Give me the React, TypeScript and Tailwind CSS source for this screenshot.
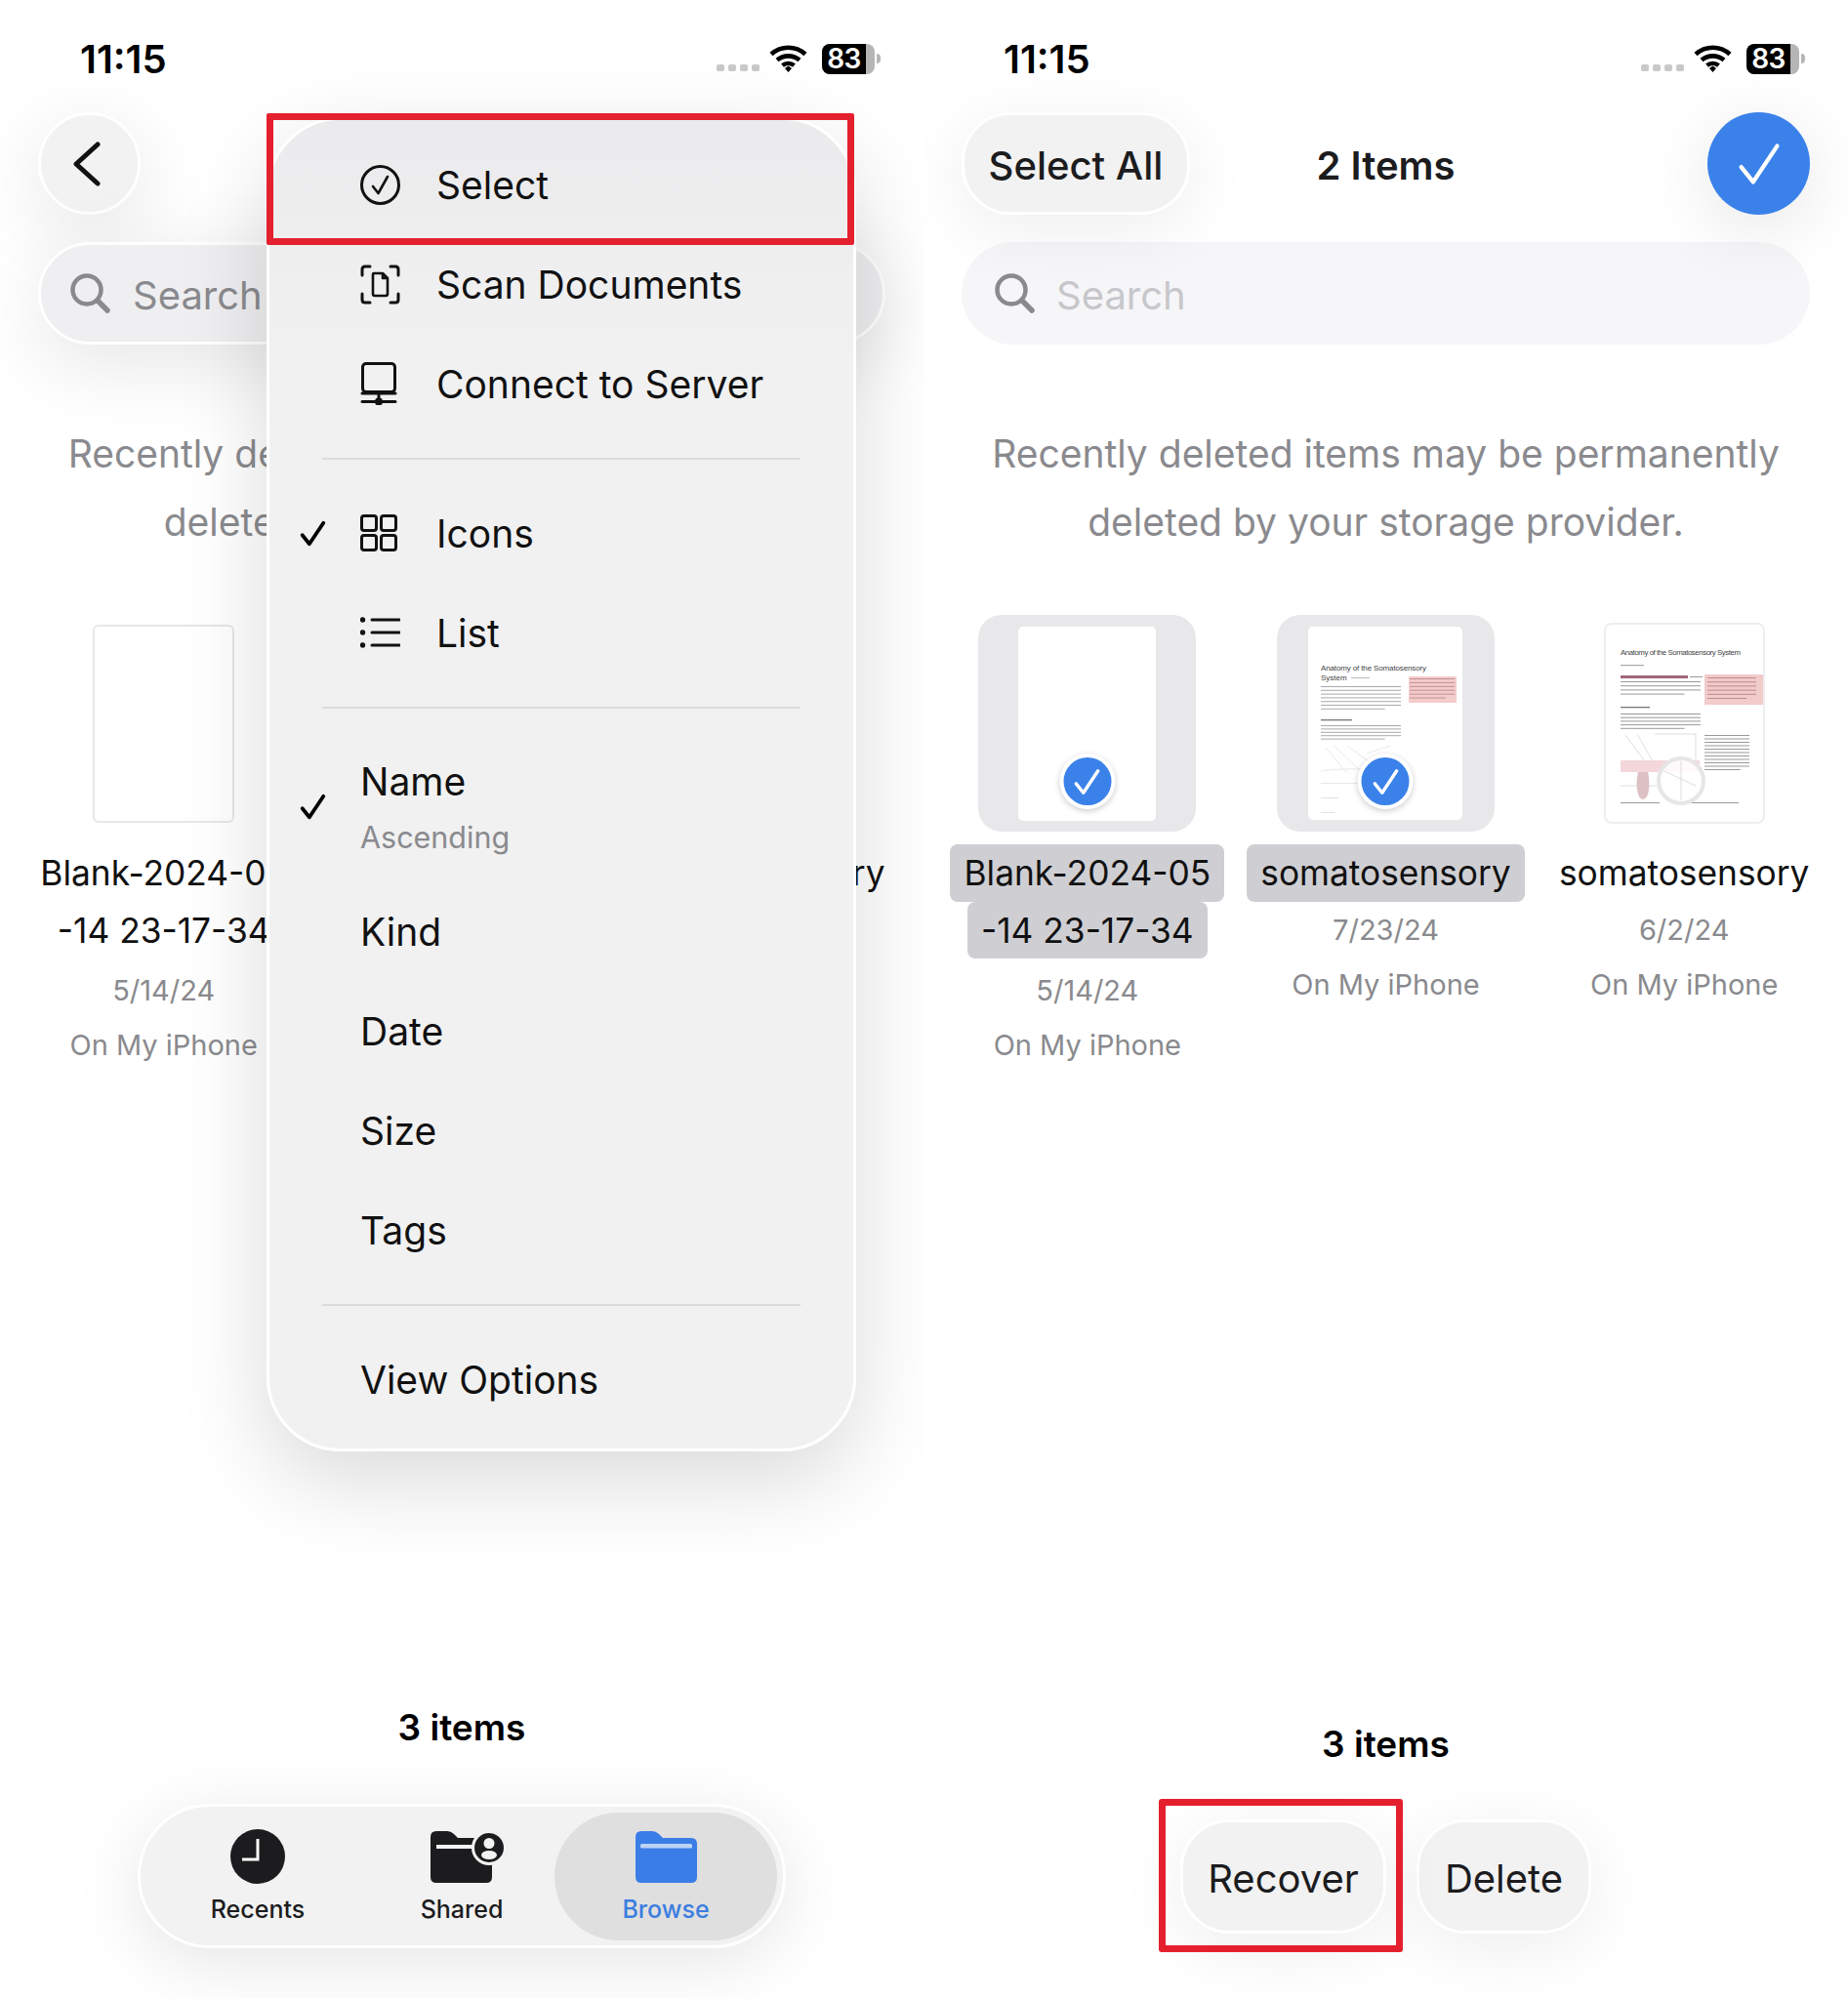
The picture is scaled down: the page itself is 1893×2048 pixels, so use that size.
import React from "react";

const Check = ({ className, w = 5 }: { className?: string; w?: number }) => (
  <svg viewBox="0 0 30 30" className={className} fill="none" stroke="currentColor" strokeWidth={w} strokeLinecap="round" strokeLinejoin="round">
    <path d="M3 17 L11 27 L27 3" />
  </svg>
);

const Wifi = () => (
  <svg viewBox="0 0 39 28" className="h-[28px] w-[39px]" fill="none" stroke="#000" strokeWidth="4.6">
    <path d="M2 9.5 C12 0.5 27 0.5 37 9.5" />
    <path d="M8 15.5 C14.5 10 24.5 10 31 15.5" />
    <path d="M13.5 21 C17 18.3 22 18.3 25.5 21" />
    <path d="M16 24 L19.5 21.5 L23 24 L19.5 28 Z" fill="#000" stroke="none" />
  </svg>
);

const StatusBar = () => (
  <div className="flex h-[115px] shrink-0 items-center justify-between pt-[5px] pr-[44px] pl-[82px]">
    <span className="mt-[2px] text-[40px] leading-none font-semibold text-black">11:15</span>
    <div className="flex items-center">
      <div className="mt-[19px] flex gap-[4px]">
        {[0, 1, 2, 3].map((i) => (
          <span key={i} className="h-[7px] w-[8px] rounded-[2px] bg-[#c9c9c9]" />
        ))}
      </div>
      <div className="mr-[15px] ml-[10px]">
        <Wifi />
      </div>
      <div className="flex h-[31px] w-[54px] rounded-[8px] bg-[#b5b5b5]">
        <div className="flex h-full w-[45px] items-center justify-center rounded-l-[8px] bg-black text-[28px] leading-[31px] font-semibold tracking-[-0.5px] text-white">83</div>
      </div>
      <div className="ml-[2px] h-[10px] w-[4px] rounded-r-full bg-[#b5b5b5]" />
    </div>
  </div>
);

const SearchBar = ({ textColor, box }: { textColor: string; box: string }) => (
  <div className={box}>
    <svg viewBox="0 0 41 41" className="h-[41px] w-[41px] shrink-0" fill="none" stroke="#8a8a8e" strokeWidth="4.5" strokeLinecap="round">
      <circle cx="17" cy="17" r="14.5" />
      <path d="M28 28 L38 38" strokeWidth="5.5" />
    </svg>
    <span className={`mt-[5px] ${textColor}`}>Search</span>
  </div>
);

const Lines = ({ x, y, w, n, step, color, h = 1 }: { x: number; y: number; w: number; n: number; step: number; color: string; h?: number }) => (
  <>
    {Array.from({ length: n }).map((_, i) => (
      <rect key={i} x={x} y={y + i * step} width={i === n - 1 ? w * 0.8 : w} height={h} fill={color} />
    ))}
  </>
);

const DocMiddle = () => (
  <svg viewBox="0 0 158 198" className="h-[198px] w-[158px] rounded-[5px] bg-white">
    <text x="13" y="45" fontSize="8" fontFamily="Liberation Sans, sans-serif" fill="#444" textLength="108">Anatomy of the Somatosensory</text>
    <text x="13" y="55" fontSize="8" fontFamily="Liberation Sans, sans-serif" fill="#444">System</text>
    <rect x="44" y="52" width="19" height="1" fill="#bbb" />
    <Lines x={13} y={61} w={82} n={7} step={3.8} color="#aaaaaa" />
    <rect x="103" y="51" width="49" height="27" fill="#f3cccc" />
    <Lines x={104} y={53} w={46} n={6} step={3.9} color="#c58f8f" />
    <rect x="13" y="95" width="32" height="1.3" fill="#777" />
    <Lines x={13} y={101} w={82} n={5} step={3.4} color="#aaaaaa" />
    <g fill="none" stroke="#e2e2e2" strokeWidth="0.8">
      <path d="M18 124 L40 150 M26 122 L52 146 M40 122 L70 144 M60 130 L84 122" />
      <path d="M13 148 C40 144 70 146 90 150" />
    </g>
    <rect x="13" y="160" width="70" height="0.8" fill="#e2e2e2" />
    <rect x="13" y="175" width="18" height="0.8" fill="#dcdcdc" />
    <rect x="13" y="190" width="14" height="0.8" fill="#dcdcdc" />
  </svg>
);

const DocThird = () => (
  <svg viewBox="0 0 161 202" className="h-[202px] w-[161px] rounded-[6px] bg-white shadow-[0_0_0_2px_#eeeef0]">
    <text x="15" y="31" fontSize="7.8" fontFamily="Liberation Sans, sans-serif" fill="#444" textLength="123">Anatomy of the Somatosensory System</text>
    <rect x="15" y="41" width="24" height="1.2" fill="#aaa" />
    <rect x="15" y="52" width="69" height="3" fill="#a0667c" />
    <Lines x={15} y={58} w={82} n={4} step={4.2} color="#999" />
    <rect x="86" y="53" width="13" height="1" fill="#999" />
    <rect x="101" y="51" width="60" height="31" fill="#f2cbcb" />
    <Lines x={104} y={54} w={50} n={6} step={4.2} color="#c08a8a" />
    <rect x="15" y="84" width="30" height="1.3" fill="#777" />
    <Lines x={15} y={91} w={82} n={5} step={3.7} color="#999" />
    <Lines x={101} y={113} w={46} n={11} step={3.5} color="#999" />
    <g fill="none" stroke="#d5d5d5" strokeWidth="0.8">
      <path d="M20 113 L40 140 M32 112 L48 140 M50 112 L92 112 M92 112 L92 165" />
      <path d="M15 165 L92 165" />
    </g>
    <rect x="15" y="139" width="81" height="12" fill="#f3d7da" />
    <path d="M33 151 C30 165 32 178 38 179 C44 178 46 165 43 151 Z" fill="#dcc0c3" />
    <rect x="15" y="182" width="40" height="1" fill="#999" />
    <rect x="86" y="182" width="50" height="1" fill="#999" />
    <circle cx="77" cy="160" r="23" fill="#fff" fillOpacity="0.85" stroke="#e6e6e6" strokeWidth="4" />
    <path d="M77 140 L77 180 M60 150 L92 165" stroke="#c8c8c8" strokeWidth="0.6" />
  </svg>
);

const Badge = () => (
  <div className="absolute top-[142px] left-1/2 flex h-[57px] w-[57px] -translate-x-1/2 items-center justify-center rounded-full bg-white shadow-[0_2px_6px_rgba(0,0,0,0.2)]">
    <div className="flex h-[49px] w-[49px] items-center justify-center rounded-full bg-[#3a82ea] text-white">
      <Check className="h-[28px] w-[28px]" w={3.6} />
    </div>
  </div>
);

type ItemProps = { lines: string[]; date: string; selected?: boolean; doc: "blank" | "middle" | "third" };

const Item = ({ lines, date, selected, doc }: ItemProps) => (
  <div className="flex flex-col items-center">
    <div className={`relative flex h-[222px] w-[223px] items-center justify-center rounded-[24px] ${selected ? "bg-[#e8e8ea]" : ""}`}>
      {doc === "blank" && (
        <div className={selected ? "h-[199px] w-[141px] rounded-[5px] bg-white" : "h-[203px] w-[145px] rounded-[6px] border-2 border-[#e7e7e9] bg-white"} />
      )}
      {doc === "middle" && <DocMiddle />}
      {doc === "third" && <DocThird />}
      {selected && <Badge />}
    </div>
    <div className="mt-[13px] flex flex-col items-center">
      {lines.map((l, i) => (
        <span
          key={l}
          className={`flex h-[58.5px] items-center px-[14px] text-[35.3px] leading-none whitespace-nowrap text-[#111] ${i === 1 ? "pt-[2px]" : ""} ${selected ? "rounded-[8px] bg-[#cfcfd3]" : ""}`}
        >
          {l}
        </span>
      ))}
    </div>
    <div className={`flex h-[56px] items-center text-[29px] leading-none text-[#8a8a8e] ${lines.length > 1 ? "mt-[4px]" : "mt-[1px]"}`}>{date}</div>
    <div className="flex h-[56px] items-center text-[29px] leading-none whitespace-nowrap text-[#8a8a8e]">On My iPhone</div>
  </div>
);

const Notice = () => (
  <p className="mt-[77px] text-center text-[39px] leading-[70px] text-[#8a8a8e]">
    Recently deleted items may be permanently
    <br />
    deleted by your storage provider.
  </p>
);

const Items = ({ selectable }: { selectable?: boolean }) => (
  <div className="mt-[60px] grid grid-cols-3 px-[15px]">
    <Item lines={["Blank-2024-05", "-14 23-17-34"]} date="5/14/24" selected={selectable} doc="blank" />
    <Item lines={["somatosensory"]} date="7/23/24" selected={selectable} doc="middle" />
    <Item lines={["somatosensory"]} date="6/2/24" doc="third" />
  </div>
);

const Row = ({ children, check, icon, h = "h-[102px]" }: { children: React.ReactNode; check?: boolean; icon?: React.ReactNode; h?: string }) => (
  <div className={`flex ${h} items-center pl-[30px] text-[39px] leading-none text-[#111]`}>
    <div className="mr-[35px] flex w-[28px] shrink-0 items-center justify-center">{check && <Check className="h-[27px] w-[27px] text-black" w={4.2} />}</div>
    {icon && <div className="flex w-[78px] shrink-0 items-center">{icon}</div>}
    {children}
  </div>
);

const Sep = () => <div className="mx-[54px] mt-[25px] mb-[24px] h-[2px] bg-[#dcdcde]" />;

const iconProps = { fill: "none", stroke: "#111", strokeWidth: 3, strokeLinecap: "round" as const, strokeLinejoin: "round" as const };

const Menu = () => (
  <div className="absolute top-[120px] left-[273px] w-[604px] rounded-[76px] border-[3px] border-white bg-linear-to-b from-[#ebebed] to-[#f1f1f2] to-[18%] pt-[15px] pb-[20px] shadow-[0_30px_90px_rgba(0,0,0,0.15)]">
    <Row
      icon={
        <svg viewBox="0 0 41 41" className="h-[41px] w-[41px]" {...iconProps}>
          <circle cx="20.5" cy="20.5" r="19" />
          <path d="M13 22 L18.5 29 L28 12" strokeWidth="2.6" />
        </svg>
      }
    >
      Select
    </Row>
    <Row
      icon={
        <svg viewBox="0 0 41 41" className="h-[41px] w-[41px]" {...iconProps}>
          <path d="M2 11 V5 Q2 2 5 2 H10 M31 2 H36 Q39 2 39 5 V11 M39 30 V36 Q39 39 36 39 H31 M10 39 H5 Q2 39 2 36 V30" />
          <path d="M14 9 H23 L28 14 V30 Q28 32 26 32 H15 Q13 32 13 30 V10 Q13 9 14 9 Z M23 9 V14 H28" strokeWidth="2.6" />
        </svg>
      }
    >
      Scan Documents
    </Row>
    <Row
      icon={
        <svg viewBox="0 0 38 44" className="h-[44px] w-[38px]" {...iconProps}>
          <rect x="2.5" y="1.5" width="33" height="29" rx="3.5" />
          <path d="M2 32 H36" />
          <path d="M19 32 V40 M2 40.5 H36" />
          <circle cx="19" cy="40.5" r="2.5" fill="#111" />
        </svg>
      }
    >
      Connect to Server
    </Row>
    <Sep />
    <Row
      check
      icon={
        <svg viewBox="0 0 38 38" className="h-[38px] w-[38px]" {...iconProps}>
          <rect x="1.5" y="1.5" width="15" height="15" rx="2.5" />
          <rect x="21.5" y="1.5" width="15" height="15" rx="2.5" />
          <rect x="1.5" y="21.5" width="15" height="15" rx="2.5" />
          <rect x="21.5" y="21.5" width="15" height="15" rx="2.5" />
        </svg>
      }
    >
      Icons
    </Row>
    <Row
      icon={
        <svg viewBox="0 0 41 32" className="h-[32px] w-[41px]" {...iconProps}>
          <path d="M12 3 H40 M12 16 H40 M12 29 H40" />
          <circle cx="2.5" cy="3" r="1.2" fill="#111" />
          <circle cx="2.5" cy="16" r="1.2" fill="#111" />
          <circle cx="2.5" cy="29" r="1.2" fill="#111" />
        </svg>
      }
    >
      List
    </Row>
    <Sep />
    <Row check h="h-[153px]">
      <div className="flex flex-col">
        <span className="leading-[48px]">Name</span>
        <span className="mt-[15px] text-[30.5px] leading-[36px] text-[#8a8a8e]">Ascending</span>
      </div>
    </Row>
    <Row>Kind</Row>
    <Row>Date</Row>
    <Row>Size</Row>
    <Row>Tags</Row>
    <Sep />
    <Row>View Options</Row>
    <div className="absolute -top-[7px] -right-[1px] -left-[3px] h-[135px] rounded-[2px] border-[7px] border-[#e5202e]" />
  </div>
);

const TabItem = ({ label, color, box, children }: { label: string; color: string; box: string; children: React.ReactNode }) => (
  <div className={`flex h-[131px] shrink-0 flex-col items-center justify-center rounded-full ${box}`}>
    <div className="flex h-[58px] items-center justify-center">{children}</div>
    <span className={`mt-[10px] text-[25px] leading-[30px] font-medium ${color}`}>{label}</span>
  </div>
);

const TabBar = () => (
  <div className="flex h-[148px] w-[664px] items-center rounded-full border-[3px] border-white bg-[#f2f2f2] pl-[25px] shadow-[0_15px_70px_rgba(0,0,0,0.1)]">
    <TabItem label="Recents" color="text-[#1c1c1e]" box="w-[190px]">
      <svg viewBox="0 0 56 56" className="h-[56px] w-[56px]">
        <circle cx="28" cy="28" r="28" fill="#1c1c1e" />
        <path d="M28 10 V31 H12" fill="none" stroke="#fff" strokeWidth="3" />
      </svg>
    </TabItem>
    <TabItem label="Shared" color="text-[#1c1c1e]" box="ml-[19px] w-[190px]">
      <svg viewBox="0 0 78 54" className="ml-[14px] h-[54px] w-[78px]">
        <path d="M0 7 Q0 1 6 1 H17 Q21 1 24 4 L28 8 H57 Q63 8 63 14 V48 Q63 54 57 54 H6 Q0 54 0 48 Z" fill="#1c1c1e" />
        <rect x="6" y="15" width="42" height="4" fill="#f2f2f2" />
        <circle cx="60" cy="18" r="18" fill="#f2f2f2" />
        <circle cx="60" cy="18" r="15" fill="#1c1c1e" />
        <circle cx="60" cy="13.5" r="5.5" fill="#f2f2f2" />
        <ellipse cx="60" cy="25.5" rx="8" ry="4.5" fill="#f2f2f2" />
      </svg>
    </TabItem>
    <TabItem label="Browse" color="text-[#3b7de0]" box="w-[228px] bg-[#dfdfdf]">
      <svg viewBox="0 0 63 54" className="h-[54px] w-[63px]">
        <path d="M0 7 Q0 1 6 1 H17 Q21 1 24 4 L28 8 H57 Q63 8 63 14 V48 Q63 54 57 54 H6 Q0 54 0 48 Z" fill="#3a7de6" />
        <rect x="5" y="14" width="53" height="4.5" rx="1.5" fill="#bcd3f6" />
      </svg>
    </TabItem>
  </div>
);

const ActionButton = ({ label, box }: { label: string; box: string }) => (
  <div className={`flex h-[117px] items-center justify-center rounded-[50px] border-[3px] border-white bg-[#f2f2f2] pt-[4px] text-[40px] leading-none text-[#1c1c1e] shadow-[0_15px_70px_rgba(0,0,0,0.07)] ${box}`}>{label}</div>
);

export default function App() {
  return (
    <div className="flex h-[2048px] w-[1893px] overflow-hidden bg-white font-['Inter',sans-serif]">
      {/* left phone */}
      <div className="relative flex h-full w-[946px] flex-col overflow-hidden">
        <StatusBar />
        <div className="px-[39px]">
          <div className="flex h-[105px] w-[105px] items-center justify-center rounded-full border-[3px] border-white bg-[#f2f2f3] shadow-[0_20px_80px_rgba(0,0,0,0.1)]">
            <svg viewBox="0 0 28 46" className="mr-[5px] h-[46px] w-[28px]" fill="none" stroke="#111" strokeWidth="5" strokeLinecap="round" strokeLinejoin="round">
              <path d="M25 3 L3 23 L25 43" />
            </svg>
          </div>
          <SearchBar
            box="mt-[28px] flex h-[105px] w-[868px] items-center gap-[23px] rounded-full border-[3px] border-white bg-[#efeff1] pl-[30px] text-[40px] leading-none shadow-[0_20px_80px_rgba(0,0,0,0.1)]"
            textColor="text-[#8a8a8e]"
          />
        </div>
        <Notice />
        <Items />
        <div className="flex-1" />
        <div className="text-center text-[37px] leading-[48px] font-semibold text-black">3 items</div>
        <div className="mt-[54px] mb-[52px] flex justify-center">
          <TabBar />
        </div>
        <Menu />
      </div>
      {/* right phone */}
      <div className="relative flex h-full w-[947px] flex-col overflow-hidden">
        <StatusBar />
        <div className="pr-[39px] pl-[39px]">
          <div className="grid grid-cols-[1fr_auto_1fr] items-center">
            <div className="flex h-[105px] w-[234px] items-center justify-center rounded-[50px] border-[3px] border-white bg-[#f2f2f3] pt-[5px] text-[40px] leading-none font-medium text-[#1c1c1e] shadow-[0_15px_70px_rgba(0,0,0,0.07)]">Select All</div>
            <div className="pt-[5px] text-[40px] leading-none font-semibold text-[#1c1c1e]">2 Items</div>
            <div className="flex h-[105px] w-[105px] items-center justify-center justify-self-end rounded-full bg-[#3a82ea] text-white shadow-[0_15px_70px_rgba(0,0,0,0.1)]">
              <Check className="h-[46px] w-[46px]" w={2.8} />
            </div>
          </div>
          <SearchBar
            box="mt-[28px] flex h-[105px] items-center gap-[22px] rounded-full bg-[#f6f6f8] pl-[34px] text-[40px] leading-none"
            textColor="text-[#c7c7cb]"
          />
        </div>
        <Notice />
        <Items selectable />
        <div className="flex-1" />
        <div className="text-center text-[37px] leading-[48px] font-semibold text-black">3 items</div>
        <div className="mt-[53px] mb-[67px] ml-[263px] flex gap-[31px]">
          <div className="relative">
            <ActionButton label="Recover" box="w-[211px]" />
            <div className="absolute -top-[21px] -right-[17px] -bottom-[19px] -left-[22px] rounded-[3px] border-[7px] border-[#e5202e]" />
          </div>
          <ActionButton label="Delete" box="w-[179px]" />
        </div>
      </div>
    </div>
  );
}
